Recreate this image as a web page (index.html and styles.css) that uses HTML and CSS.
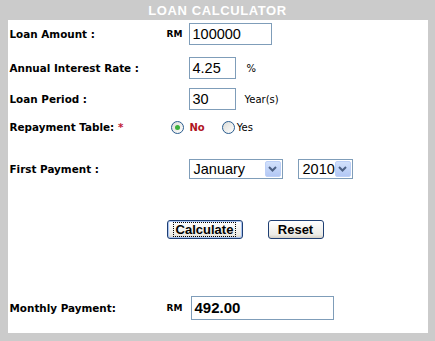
FILE: index.html
```html
<!DOCTYPE html>
<html>
<head>
<meta charset="utf-8">
<link rel="stylesheet" href="styles.css">
</head>
<body>
<div class="frame">
  <div class="title">LOAN CALCULATOR</div>
  <div class="panel">
    <div class="row r1">
      <div class="label">Loan Amount :</div>
      <div class="rm">RM</div>
      <div class="field"><span class="input w83">100000</span></div>
    </div>
    <div class="row r2">
      <div class="label">Annual Interest Rate :</div>
      <div class="rm"></div>
      <div class="field"><span class="input w47">4.25</span><span class="unit u-pct">%</span></div>
    </div>
    <div class="row r3">
      <div class="label">Loan Period :</div>
      <div class="rm"></div>
      <div class="field"><span class="input w47">30</span><span class="unit u-yr">Year(s)</span></div>
    </div>
    <div class="row r4">
      <div class="label">Repayment Table: <span class="req">*</span></div>
      <div class="rm"></div>
      <div class="field radios">
        <span class="radio checked"></span><span class="no">No</span>
        <span class="radio"></span><span class="yes">Yes</span>
      </div>
    </div>
    <div class="row r5">
      <div class="label">First Payment :</div>
      <div class="rm"></div>
      <div class="field">
        <span class="select s-month"><span class="val">January</span><span class="arrow"><svg width="9" height="6" viewBox="0 0 9 6"><path d="M1 1 L4.5 4.5 L8 1" fill="none" stroke="#4d6185" stroke-width="2"/></svg></span></span>
        <span class="select s-year"><span class="val">2010</span><span class="arrow"><svg width="9" height="6" viewBox="0 0 9 6"><path d="M1 1 L4.5 4.5 L8 1" fill="none" stroke="#4d6185" stroke-width="2"/></svg></span></span>
      </div>
    </div>
    <div class="row r6">
      <button class="btn btn-calc"><span class="focus">Calculate</span></button>
      <button class="btn btn-reset">Reset</button>
    </div>
    <div class="row r7">
      <div class="label">Monthly Payment:</div>
      <div class="rm">RM</div>
      <div class="field"><span class="input result">492.00</span></div>
    </div>
  </div>
</div>
</body>
</html>
```

FILE: styles.css
```css
html, body {
  margin: 0;
  padding: 0;
  background: #cbcbcb;
}
.frame {
  width: 435px;
  height: 341px;
  background: #cbcbcb;
  display: flex;
  flex-direction: column;
  align-items: center;
}
.title {
  height: 20px;
  line-height: 22px;
  font-family: "Liberation Sans", Arial, sans-serif;
  font-weight: bold;
  font-size: 13px;
  color: #ffffff;
  letter-spacing: 0.6px;
}
.panel {
  width: 420px;
  height: 313px;
  background: #ffffff;
  box-sizing: border-box;
  padding-left: 2px;
  display: flex;
  flex-direction: column;
}
.row {
  display: flex;
  align-items: center;
}
.r1 { height: 28px; }
.r2 { height: 40px; }
.r3 { height: 22px; }
.r4 { height: 34px; }
.r5 { height: 50px; }
.r6 { height: 70px; padding-left: 157px; }
.r7 { height: 28px; margin-top: 30px; }
.label {
  width: 157px;
  font-family: "DejaVu Sans", Verdana, sans-serif;
  font-weight: bold;
  font-size: 10.4px;
  color: #000;
}
.req { color: #c0203a; font-weight: bold; }
.rm {
  width: 22px;
  font-family: "DejaVu Sans", Verdana, sans-serif;
  font-weight: bold;
  font-size: 9px;
  color: #000;
}
.field {
  display: flex;
  align-items: center;
}
.input {
  box-sizing: border-box;
  height: 22px;
  border: 1px solid #7f9db9;
  background: #fff;
  font-family: "Liberation Sans", Arial, sans-serif;
  font-size: 14.5px;
  line-height: 20px;
  padding-left: 3px;
  color: #000;
}
.w83 { width: 83px; }
.w47 { width: 47px; }
.result {
  width: 143px;
  height: 24px;
  line-height: 22px;
  font-weight: bold;
  font-size: 15px;
  margin-left: 2px;
}
.unit {
  font-family: "DejaVu Sans", Verdana, sans-serif;
  font-size: 10px;
  color: #000;
}
.u-pct { margin-left: 11px; }
.u-yr { margin-left: 9px; }
.radios {
  font-family: "DejaVu Sans", Verdana, sans-serif;
  font-size: 10px;
}
.radio {
  box-sizing: border-box;
  width: 13px;
  height: 13px;
  border-radius: 50%;
  border: 1px solid #2a5c8e;
  background: linear-gradient(135deg, #dcdcd7, #ffffff);
  display: inline-flex;
  align-items: center;
  justify-content: center;
}
.radio.checked::after {
  content: "";
  width: 5px;
  height: 5px;
  border-radius: 50%;
  background: #3bb03b;
}
.radios .radio:first-child { margin-left: -18px; }
.no {
  color: #b0141e;
  font-weight: bold;
  margin-left: 6px;
  margin-right: 17px;
}
.yes { margin-left: 2px; }
.select {
  box-sizing: border-box;
  height: 20px;
  border: 1px solid #7f9db9;
  display: inline-flex;
  align-items: center;
  justify-content: space-between;
  padding: 1px;
  font-family: "Liberation Sans", Arial, sans-serif;
  font-size: 14.5px;
}
.select .val { padding-left: 3px; }
.s-month { width: 94px; }
.s-year { width: 55px; margin-left: 15px; }
.arrow {
  width: 16px;
  height: 16px;
  box-sizing: border-box;
  background: linear-gradient(#d2e1fc, #b3c8f5);
  border: 1px solid #bdd0f7;
  border-radius: 2px;
  display: flex;
  align-items: center;
  justify-content: center;
}
.btn {
  box-sizing: border-box;
  height: 19px;
  border: 1px solid #1f3f73;
  border-radius: 3px;
  background: linear-gradient(#ffffff, #ecebe6 80%, #d6d0c5);
  font-family: "Liberation Sans", Arial, sans-serif;
  font-weight: bold;
  font-size: 13px;
  color: #000;
  padding: 0;
  margin: 0;
  display: inline-flex;
  align-items: center;
  justify-content: center;
}
.btn-calc {
  width: 76px;
  box-shadow: inset 0 0 0 1px #a9c4f2;
}
.btn-calc .focus {
  border: 1px dotted #000;
  padding: 0 2px;
  line-height: 13px;
}
.btn-reset {
  width: 56px;
  margin-left: 25px;
}
```
